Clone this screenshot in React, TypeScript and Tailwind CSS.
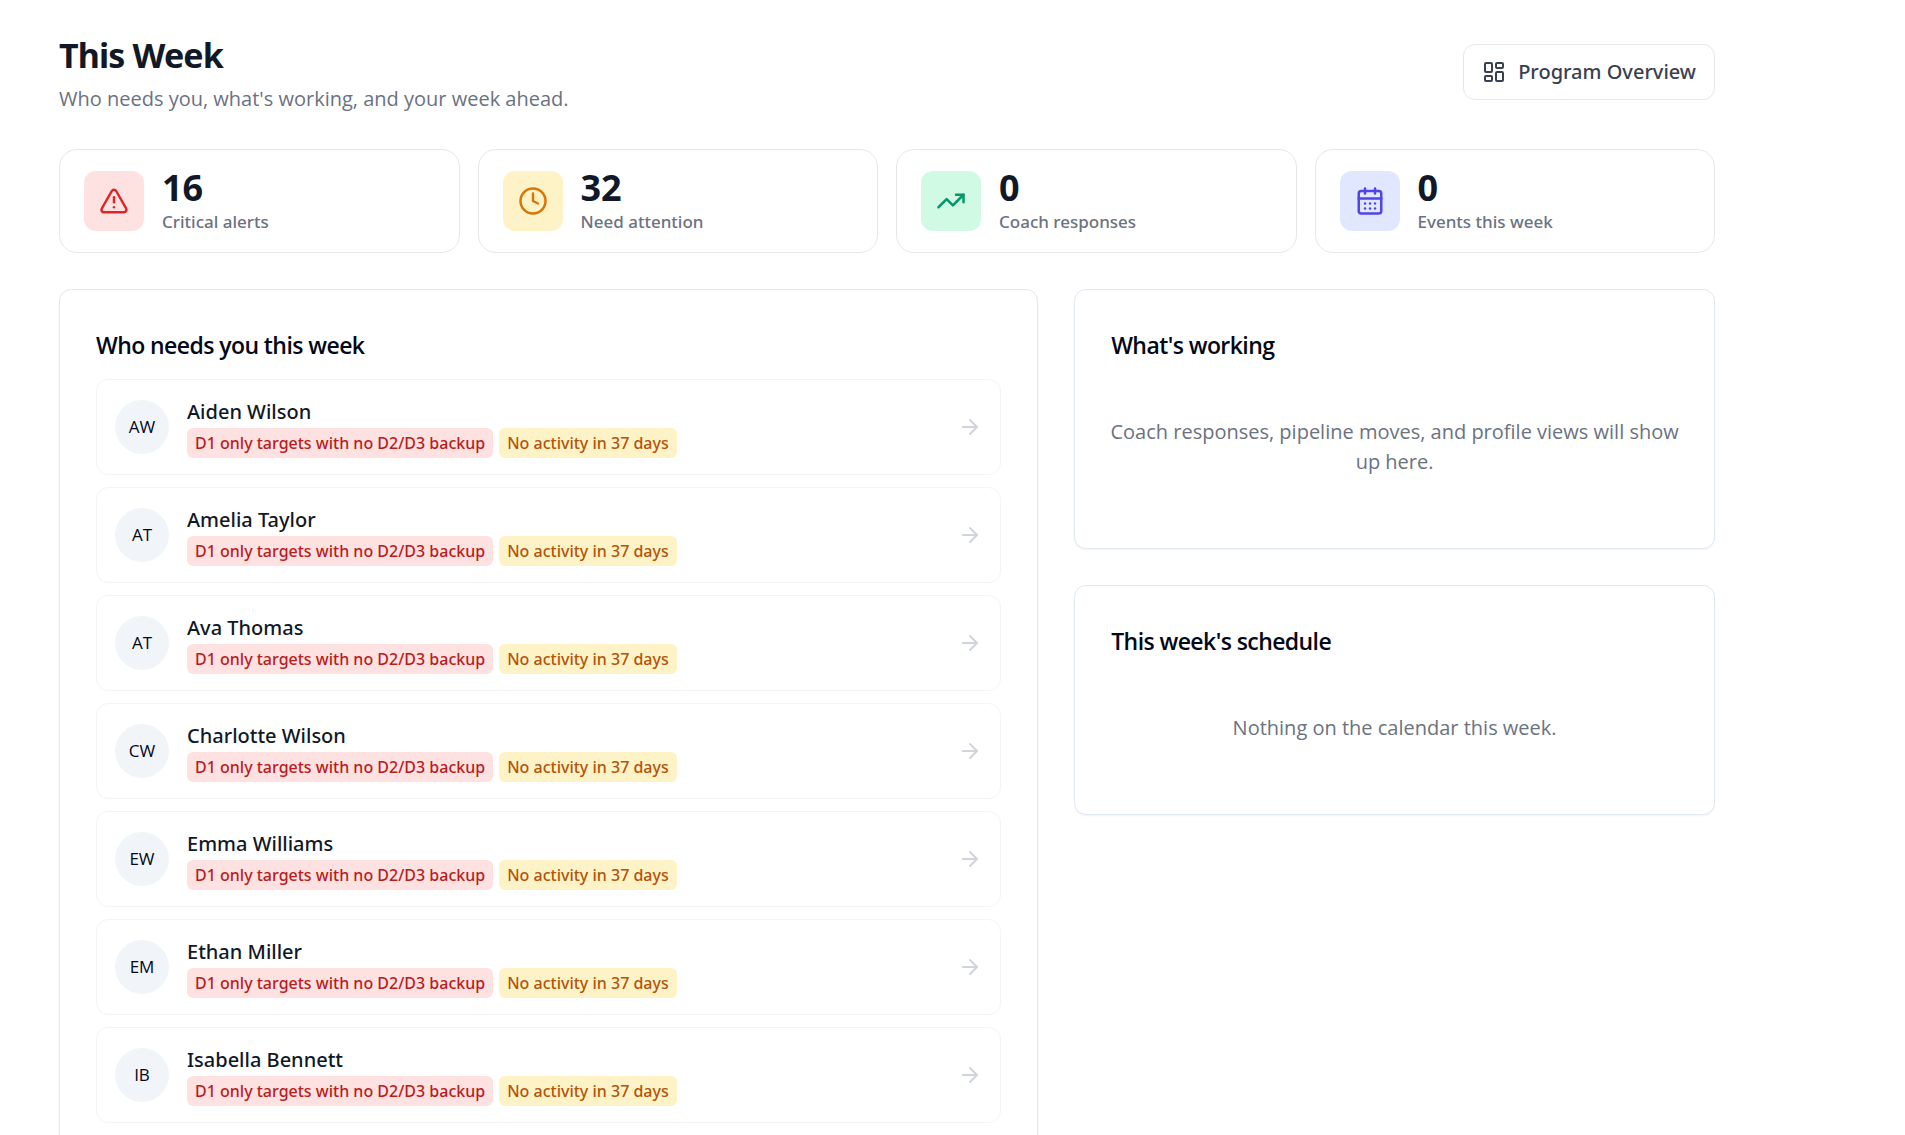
import { ArrowRight, CalendarDays, Clock, LayoutDashboard, TrendingUp, TriangleAlert } from 'lucide-react';
import type { LucideIcon } from 'lucide-react';
import type { ReactNode } from 'react';

interface Stat {
  label: string;
  value: number;
  icon: LucideIcon;
  tile: string;
}

const STATS: Stat[] = [
  { label: 'Critical alerts', value: 16, icon: TriangleAlert, tile: 'bg-[#fee2e2] text-[#dc2626]' },
  { label: 'Need attention', value: 32, icon: Clock, tile: 'bg-[#fef3c7] text-[#d97706]' },
  { label: 'Coach responses', value: 0, icon: TrendingUp, tile: 'bg-[#d1fae5] text-[#059669]' },
  { label: 'Events this week', value: 0, icon: CalendarDays, tile: 'bg-[#e0e7ff] text-[#4f46e5]' },
];

const ATHLETES = [
  'Aiden Wilson',
  'Amelia Taylor',
  'Ava Thomas',
  'Charlotte Wilson',
  'Emma Williams',
  'Ethan Miller',
  'Isabella Bennett',
];

const initials = (name: string) =>
  name
    .split(' ')
    .map((part) => part[0])
    .join('');

function StatCard({ stat }: { stat: Stat }) {
  const Icon = stat.icon;
  return (
    <div className="flex items-center gap-[18px] rounded-[18px] border border-[#e5e7eb] bg-white px-6 py-[17px]">
      <div className={`flex size-[60px] shrink-0 items-center justify-center rounded-xl ${stat.tile}`}>
        <Icon size={30} />
      </div>
      <div>
        <p className="text-[36px] leading-[42px] font-bold text-[#111827]">{stat.value}</p>
        <p className="text-[17px] leading-[26px] font-medium text-[#6b7280]">{stat.label}</p>
      </div>
    </div>
  );
}

function Panel({ title, children }: { title: string; children: ReactNode }) {
  return (
    <section className="rounded-xl border border-[#e2e8f0] bg-white p-9 shadow-xs">
      <h2 className="mb-[15px] font-['Open_Sans',sans-serif] text-[23px] leading-[38px] font-semibold tracking-tight text-[#020817]">
        {title}
      </h2>
      {children}
    </section>
  );
}

function EmptyNote({ children }: { children: ReactNode }) {
  return (
    <p className="-mx-2 pt-[38px] pb-[35px] text-center font-['Open_Sans',sans-serif] text-[20px] leading-[30px] text-[#6b7280]">
      {children}
    </p>
  );
}

function AthleteRow({ name }: { name: string }) {
  return (
    <a
      href="#athlete"
      className="flex h-24 items-center gap-[18px] rounded-xl border border-[#f3f4f6] px-[18px] hover:bg-gray-50"
    >
      <span className="flex size-[54px] shrink-0 items-center justify-center rounded-full bg-[#f1f5f9] font-['Open_Sans',sans-serif] text-[17px] text-[#020817]">
        {initials(name)}
      </span>
      <span className="min-w-0 flex-1">
        <span className="block text-[20px] leading-8 font-medium text-[#111827]">{name}</span>
        <span className="flex flex-wrap gap-1.5">
          <span className="rounded-md bg-[#fee2e2] px-2 py-[3px] text-[16px] leading-6 font-medium text-[#b91c1c]">
            D1 only targets with no D2/D3 backup
          </span>
          <span className="rounded-md bg-[#fef3c7] px-2 py-[3px] text-[16px] leading-6 font-medium text-[#b45309]">
            No activity in 37 days
          </span>
        </span>
      </span>
      <ArrowRight size={24} className="shrink-0 text-[#d1d5db]" />
    </a>
  );
}

export default function App() {
  return (
    <main className="h-screen overflow-hidden bg-white pt-[29px] pr-[190px] pl-[59px] font-['Noto_Sans',sans-serif]">
      <header className="mb-[35px] flex items-center justify-between">
        <div>
          <h1 className="text-[34px] leading-[52px] font-bold tracking-tight text-[#111827]">This Week</h1>
          <p className="mt-[3px] font-['Open_Sans',sans-serif] text-[20px] leading-[30px] text-[#6b7280]">
            Who needs you, what's working, and your week ahead.
          </p>
        </div>
        <button
          type="button"
          className="flex h-14 items-center gap-3 rounded-xl border border-[#e5e7eb] bg-white px-[18px] text-[20px] leading-[30px] font-medium text-[#374151]"
        >
          <LayoutDashboard size={24} />
          Program Overview
        </button>
      </header>

      {/* Headline numbers */}
      <div className="mb-9 grid grid-cols-4 gap-[18px]">
        {STATS.map((stat) => (
          <StatCard key={stat.label} stat={stat} />
        ))}
      </div>

      <div className="grid grid-cols-5 items-start gap-9">
        <div className="col-span-3">
          <Panel title="Who needs you this week">
            <div className="space-y-3">
              {ATHLETES.map((name) => (
                <AthleteRow key={name} name={name} />
              ))}
              {/* The list carries on below the fold */}
              <div className="h-24 rounded-xl border border-[#f3f4f6]" />
            </div>
          </Panel>
        </div>

        <div className="col-span-2 space-y-9">
          <Panel title="What's working">
            <EmptyNote>Coach responses, pipeline moves, and profile views will show up here.</EmptyNote>
          </Panel>
          <Panel title="This week's schedule">
            <EmptyNote>Nothing on the calendar this week.</EmptyNote>
          </Panel>
        </div>
      </div>
    </main>
  );
}
